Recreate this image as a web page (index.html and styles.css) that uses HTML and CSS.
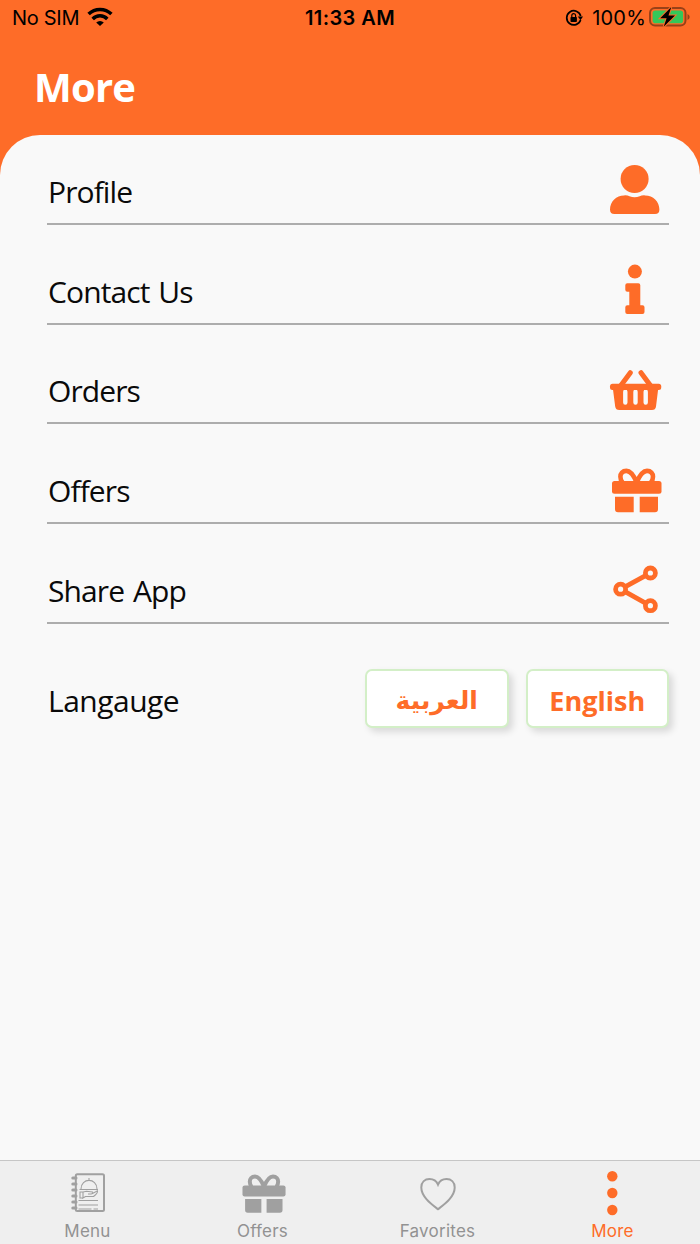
FILE: index.html
```
<!DOCTYPE html>
<html lang="en">
<head>
    <meta charset="UTF-8">
    <meta name="viewport" content="width=device-width, initial-scale=1.0">
    <title>More</title>
    <link rel="stylesheet" href="styles.css">
</head>
<body>
    <svg class="symbols">
        <symbol id="gift" viewBox="0 0 54 54">
            <path class="bow" d="M28.7 21.5C26 15 22.5 9.9 18.4 9.9C14.5 9.9 12.4 12.6 12.4 15.8C12.4 18 13.2 20 14.5 21.5M28.7 21.5C31.4 15 34.9 9.9 39 9.9C42.9 9.9 45 12.6 45 15.8C45 18 44.2 20 42.9 21.5" />
            <rect x="4" y="20" width="49.5" height="12.7" rx="2.5" />
            <path d="M7 35.7H25.7V51.3H10Q7 51.3 7 48.3ZM31.7 35.7H50V48.3Q50 51.3 47 51.3H31.7Z" />
        </symbol>
    </svg>

    <div class="screen">
        <div class="status-bar">
            <div class="carrier">
                <span>No SIM</span>
                <svg class="wifi" width="26" height="20" viewBox="0 0 26 20">
                    <path class="wave" d="M1.6 7.1A16.3 16.3 0 0 1 24.4 7.1" />
                    <path class="wave" d="M5.7 11.9A10.3 10.3 0 0 1 20.3 11.9" />
                    <path d="M13 19L9.2 15.5A5.4 5.4 0 0 1 16.8 15.5Z" />
                </svg>
            </div>
            <div class="time">11:33 AM</div>
            <div class="battery">
                <svg class="lock" width="18" height="18" viewBox="0 0 18 18">
                    <path class="ring" d="M15.6 11A7.1 7.1 0 1 1 15.7 7" />
                    <path d="M12.8 7.4H18L15.5 11.2Z" />
                    <rect x="5.5" y="8" width="6.4" height="5" rx="0.8" />
                    <path class="shackle" d="M6.8 8.3V6.6A1.9 1.9 0 0 1 10.6 6.6V8.3" />
                </svg>
                <span>100%</span>
                <svg class="cell" width="42" height="22" viewBox="0 0 42 22">
                    <rect class="shell" x="1" y="2" width="35.5" height="17.6" rx="5" />
                    <path class="cap" d="M38.5 8V14Q40.7 13.2 40.7 11T38.5 8Z" />
                    <rect class="charge" x="3.6" y="4.5" width="30.5" height="12.7" rx="2.8" />
                    <path class="bolt" d="M22.3 1L11.2 12.2H17.6L14.7 20.8L26 9.5H19.5Z" />
                </svg>
            </div>
        </div>
        <h1>More</h1>

        <div class="sheet">
            <div class="row">
                <span>Profile</span>
                <svg class="icon" viewBox="0 0 54 54">
                    <circle cx="26.6" cy="17" r="14" />
                    <path d="M2 47.5C2 39.5 8.5 33.4 16 33.4Q19.5 33.2 21.5 34.2Q26.6 36.2 31.7 34.2Q33.7 33.2 37.2 33.4C45 33.4 51.4 39.5 51.4 47.5Q51.4 52 47 52H6.4Q2 52 2 47.5Z" />
                </svg>
            </div>
            <div class="row">
                <span>Contact Us</span>
                <svg class="icon" viewBox="0 0 54 54">
                    <circle cx="26.9" cy="9.6" r="7" />
                    <path d="M19.3 21.3H30.3Q32.3 21.3 32.3 23.3V43.3H34.5Q36.5 43.3 36.5 45.3V50Q36.5 52 34.5 52H19.3Q17.3 52 17.3 50V45.3Q17.3 43.3 19.3 43.3H21.3V29.8H19.3Q17.3 29.8 17.3 27.8V23.3Q17.3 21.3 19.3 21.3Z" />
                </svg>
            </div>
            <div class="row">
                <span>Orders</span>
                <svg class="icon" viewBox="0 0 54 54">
                    <path class="handle" d="M22.3 11.7L12.5 25M33 11.7L42.8 25" />
                    <rect x="2" y="22.8" width="51.2" height="6.3" rx="2.5" />
                    <path fill-rule="evenodd" d="M4.8 27H50.3L48 45.5Q47.5 49 44 49H11.2Q7.7 49 7.2 45.5ZM15.1 30.7V41.6A2.2 2.2 0 0 0 19.5 41.6V30.7A2.2 2.2 0 0 0 15.1 30.7ZM25.3 30.7V41.6A2.2 2.2 0 0 0 29.7 41.6V30.7A2.2 2.2 0 0 0 25.3 30.7ZM35.5 30.7V41.6A2.2 2.2 0 0 0 39.9 41.6V30.7A2.2 2.2 0 0 0 35.5 30.7Z" />
                </svg>
            </div>
            <div class="row">
                <span>Offers</span>
                <svg class="icon"><use href="#gift" /></svg>
            </div>
            <div class="row">
                <span>Share App</span>
                <svg class="icon share" viewBox="0 0 54 54">
                    <path d="M17 25.9L38 14.3M17 30.6L38 42.3" />
                    <circle cx="42.4" cy="12" r="5" />
                    <circle cx="12.6" cy="28.2" r="5" />
                    <circle cx="42.4" cy="44.7" r="5" />
                </svg>
            </div>

            <div class="language">
                <span>Langauge</span>
                <button class="arabic" lang="ar">العربية</button>
                <button>English</button>
            </div>
        </div>

        <div class="tab-bar">
            <div class="tab">
                <svg width="48" height="48" viewBox="0 0 48 48">
                    <rect class="cover" x="11.8" y="6.3" width="28.2" height="36.6" rx="1.5" />
                    <path class="spiral" d="M12 10H8.8M12 16H8.8M12 22H8.8M12 28H8.8M12 34H8.8M12 40H8.8" />
                    <path class="dish" d="M15.5 21.5H34M17 21C17 9.5 33 9.5 33 21M25 12V10M19 24L22.5 23.3L28.5 24Q29.5 25.8 27 26H24M28.5 25.5L33.5 22.8Q34 25 29.5 28.5H21.5L18 30.5M16 24H19V30H16Z" />
                    <path class="lines" d="M14.5 32.5H34M14.5 37H34M14.5 41H27.5M29.5 41H34" />
                </svg>
                <span>Menu</span>
            </div>
            <div class="tab">
                <svg class="tab-gift" width="47" height="47"><use href="#gift" /></svg>
                <span>Offers</span>
            </div>
            <div class="tab">
                <svg width="48" height="48" viewBox="0 0 48 48">
                    <path class="heart" d="M24 41.2C18 36.5 7.3 29 7.3 19.5C7.3 14 11 11 15.5 11C19.5 11 22.5 13 24 16.6C25.5 13 28.5 11 32.5 11C37 11 40.7 14 40.7 19.5C40.7 29 30 36.5 24 41.2Z" />
                </svg>
                <span>Favorites</span>
            </div>
            <div class="tab active">
                <svg width="48" height="48" viewBox="0 0 48 48">
                    <circle cx="23.3" cy="8.2" r="5.2" />
                    <circle cx="23.3" cy="25" r="5.2" />
                    <circle cx="23.3" cy="42" r="5.2" />
                </svg>
                <span>More</span>
            </div>
        </div>
    </div>
</body>
</html>
```
FILE: styles.css
```
body {
    margin: 0;
    background-color: #fe6c28;
    font-family: "Open Sans", "Noto Sans", sans-serif;
}
.symbols {
    display: none;
}
.screen {
    display: flex;
    flex-direction: column;
    height: 1244px;
}
.status-bar {
    display: grid;
    grid-template-columns: 1fr auto 1fr;
    align-items: center;
    height: 36px;
    padding: 0 9px 0 12px;
    font-family: Inter, sans-serif;
    font-size: 20px;
    color: #000;
}
.carrier, .battery {
    display: flex;
    align-items: center;
}
.carrier span {
    letter-spacing: -0.3px;
}
.battery {
    justify-content: flex-end;
}
.battery span {
    letter-spacing: 0.2px;
}
.wifi {
    margin: -3px 0 0 8px;
}
.wave {
    fill: none;
    stroke: #000;
    stroke-width: 3.5;
}
.time {
    margin-right: 3px;
    font-weight: 600;
    letter-spacing: 0.4px;
}
.lock {
    margin-right: 9px;
}
.ring, .shackle {
    fill: none;
    stroke: #000;
    stroke-width: 1.7;
}
.shackle {
    stroke-width: 1.2;
}
.cell {
    margin: -2px 0 0 3px;
}
.shell {
    fill: none;
    stroke: #984118;
    stroke-width: 2;
}
.cap {
    fill: #984118;
}
.charge {
    fill: #34c759;
}
.bolt {
    stroke: #fe6c28;
    stroke-width: 2;
    paint-order: stroke;
}
h1 {
    height: 99.4px;
    margin: 0;
    padding-left: 34px;
    line-height: 102px;
    font-size: 40px;
    letter-spacing: -0.8px;
    color: #fff;
}
.sheet {
    flex: 1;
    padding: 0 31px 0 47px;
    border-radius: 40px 40px 0 0;
    background-color: #f9f9f9;
    font-size: 30px;
    letter-spacing: -0.9px;
    word-spacing: 2px;
    color: #0a0a0a;
}
.row {
    display: flex;
    justify-content: space-between;
    align-items: flex-end;
    box-sizing: border-box;
    height: 99.6px;
    padding: 0 7px 7px 0;
    border-bottom: 2px solid #adadad;
}
.row:first-child {
    height: 89.9px;
}
.row span {
    padding-left: 1px;
    line-height: 48px;
}
.icon {
    width: 54px;
    height: 54px;
    color: #fe6c28;
    fill: #fe6c28;
}
.bow {
    fill: none;
    stroke: currentColor;
    stroke-width: 4.6;
}
.handle {
    stroke: #fe6c28;
    stroke-width: 5;
    stroke-linecap: round;
}
.share {
    fill: none;
    stroke: #fe6c28;
    stroke-width: 4.8;
}
.language {
    display: flex;
    gap: 17px;
    margin-top: 45.4px;
    line-height: 63px;
}
.language span {
    flex: 1;
    padding-left: 1px;
    letter-spacing: -0.5px;
}
button {
    box-sizing: border-box;
    width: 143.5px;
    height: 59px;
    padding: 3px 0 0;
    border: 2px solid #d3efc7;
    border-radius: 7px;
    background-color: #fff;
    box-shadow: 4px 4px 7px rgba(0, 0, 0, 0.13);
    font: bold 27px "Open Sans", sans-serif;
    color: #fe6c28;
}
.arabic {
    font-family: "DejaVu Sans", sans-serif;
    font-size: 25px;
}
.tab-bar {
    display: flex;
    box-sizing: border-box;
    height: 84px;
    padding-top: 7px;
    border-top: 1px solid #c6c6c6;
    background-color: #efefef;
}
.tab {
    display: flex;
    flex: 1;
    flex-direction: column;
    align-items: center;
    height: 76px;
    font-family: Inter, sans-serif;
    font-size: 17px;
    letter-spacing: 0.25px;
    color: #a0a0a0;
    fill: #a0a0a0;
}
.tab svg {
    flex-shrink: 0;
}
.tab span {
    padding-top: 1px;
    line-height: 28px;
    color: #929292;
}
.tab .tab-gift {
    margin-bottom: 1px;
}
.cover, .spiral, .dish, .lines, .heart {
    fill: none;
    stroke: #a0a0a0;
}
.cover {
    stroke-width: 2;
}
.spiral {
    stroke-width: 3;
    stroke-linecap: round;
}
.dish, .lines {
    stroke-width: 1.1;
}
.heart {
    stroke-width: 2;
}
.active {
    fill: #fe6c28;
}
.active span {
    color: #fe6c28;
}
```
